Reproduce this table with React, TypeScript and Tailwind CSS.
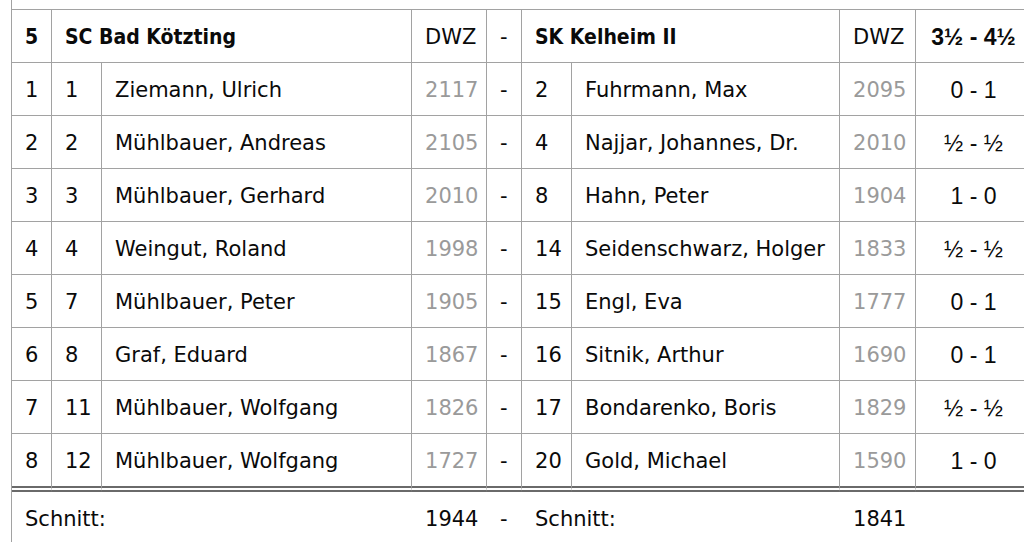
import React from "react";

type Row = {
  b: number;
  hn: number;
  hname: string;
  hdwz: string;
  gn: number;
  gname: string;
  gdwz: string;
  res: string;
};

const rows: Row[] = [
  { b: 1, hn: 1, hname: "Ziemann, Ulrich", hdwz: "2117", gn: 2, gname: "Fuhrmann, Max", gdwz: "2095", res: "0 - 1" },
  { b: 2, hn: 2, hname: "Mühlbauer, Andreas", hdwz: "2105", gn: 4, gname: "Najjar, Johannes, Dr.", gdwz: "2010", res: "½ - ½" },
  { b: 3, hn: 3, hname: "Mühlbauer, Gerhard", hdwz: "2010", gn: 8, gname: "Hahn, Peter", gdwz: "1904", res: "1 - 0" },
  { b: 4, hn: 4, hname: "Weingut, Roland", hdwz: "1998", gn: 14, gname: "Seidenschwarz, Holger", gdwz: "1833", res: "½ - ½" },
  { b: 5, hn: 7, hname: "Mühlbauer, Peter", hdwz: "1905", gn: 15, gname: "Engl, Eva", gdwz: "1777", res: "0 - 1" },
  { b: 6, hn: 8, hname: "Graf, Eduard", hdwz: "1867", gn: 16, gname: "Sitnik, Arthur", gdwz: "1690", res: "0 - 1" },
  { b: 7, hn: 11, hname: "Mühlbauer, Wolfgang", hdwz: "1826", gn: 17, gname: "Bondarenko, Boris", gdwz: "1829", res: "½ - ½" },
  { b: 8, hn: 12, hname: "Mühlbauer, Wolfgang", hdwz: "1727", gn: 20, gname: "Gold, Michael", gdwz: "1590", res: "1 - 0" },
];

const base = "border-r border-[#a2a2a2] pl-[13px] pt-[3px] align-middle whitespace-nowrap";
const cell = `${base} h-[53px] border-b`;
const lastCell = `${base} h-[58px] border-b-[6px] border-double border-b-[#6a6a6a]`;
const arial = { fontFamily: '"Liberation Sans", Arial, sans-serif' };
const cond = { fontFamily: '"DejaVu Sans Condensed", "DejaVu Sans", sans-serif' };

export default function App() {
  return (
    <div
      className="w-[1024px] h-[542px] overflow-hidden bg-white text-[#0a0a0a] text-[21px]"
      style={{ fontFamily: '"DejaVu Sans", Verdana, sans-serif' }}
    >
      <div className="ml-[11px] h-[9px] border-l border-[#a2a2a2]" />
      <table className="ml-[11px] w-[1020px] table-fixed border-separate border-spacing-0 border-l border-t border-[#a2a2a2]">
        <colgroup>
          <col className="w-[40px]" />
          <col className="w-[50px]" />
          <col className="w-[310px]" />
          <col className="w-[75px]" />
          <col className="w-[35px]" />
          <col className="w-[50px]" />
          <col className="w-[268px]" />
          <col className="w-[76px]" />
          <col className="w-[116px]" />
        </colgroup>
        <thead>
          <tr>
            <td className={`${cell} font-bold`} style={cond}>5</td>
            <td className={`${cell} font-bold`} colSpan={2} style={cond}>SC Bad Kötzting</td>
            <td className={cell}>DWZ</td>
            <td className={cell}>-</td>
            <td className={`${cell} font-bold`} colSpan={2} style={cond}>SK Kelheim II</td>
            <td className={cell}>DWZ</td>
            <td className={`${cell} font-bold text-center !pl-0 text-[23px]`} style={arial}>
              3½ - 4½
            </td>
          </tr>
        </thead>
        <tbody>
          {rows.map((r, i) => {
            const c = i === rows.length - 1 ? lastCell : cell;
            return (
              <tr key={r.b}>
                <td className={c}>{r.b}</td>
                <td className={c}>{r.hn}</td>
                <td className={c}>{r.hname}</td>
                <td className={`${c} text-[#9a9a9a]`}>{r.hdwz}</td>
                <td className={c}>-</td>
                <td className={c}>{r.gn}</td>
                <td className={c}>{r.gname}</td>
                <td className={`${c} text-[#9a9a9a]`}>{r.gdwz}</td>
                <td className={`${c} text-center !pl-0 text-[23px]`} style={arial}>
                  {r.res}
                </td>
              </tr>
            );
          })}
        </tbody>
        <tfoot>
          <tr>
            <td className="h-[53px] pl-[13px] pt-[3px] whitespace-nowrap" colSpan={3}>Schnitt:</td>
            <td className="h-[53px] pl-[13px] pt-[3px]">1944</td>
            <td className="h-[53px] pl-[13px] pt-[3px]">-</td>
            <td className="h-[53px] pl-[13px] pt-[3px] whitespace-nowrap" colSpan={2}>Schnitt:</td>
            <td className="h-[53px] pl-[13px] pt-[3px]">1841</td>
            <td className="h-[53px]"></td>
          </tr>
        </tfoot>
      </table>
    </div>
  );
}
